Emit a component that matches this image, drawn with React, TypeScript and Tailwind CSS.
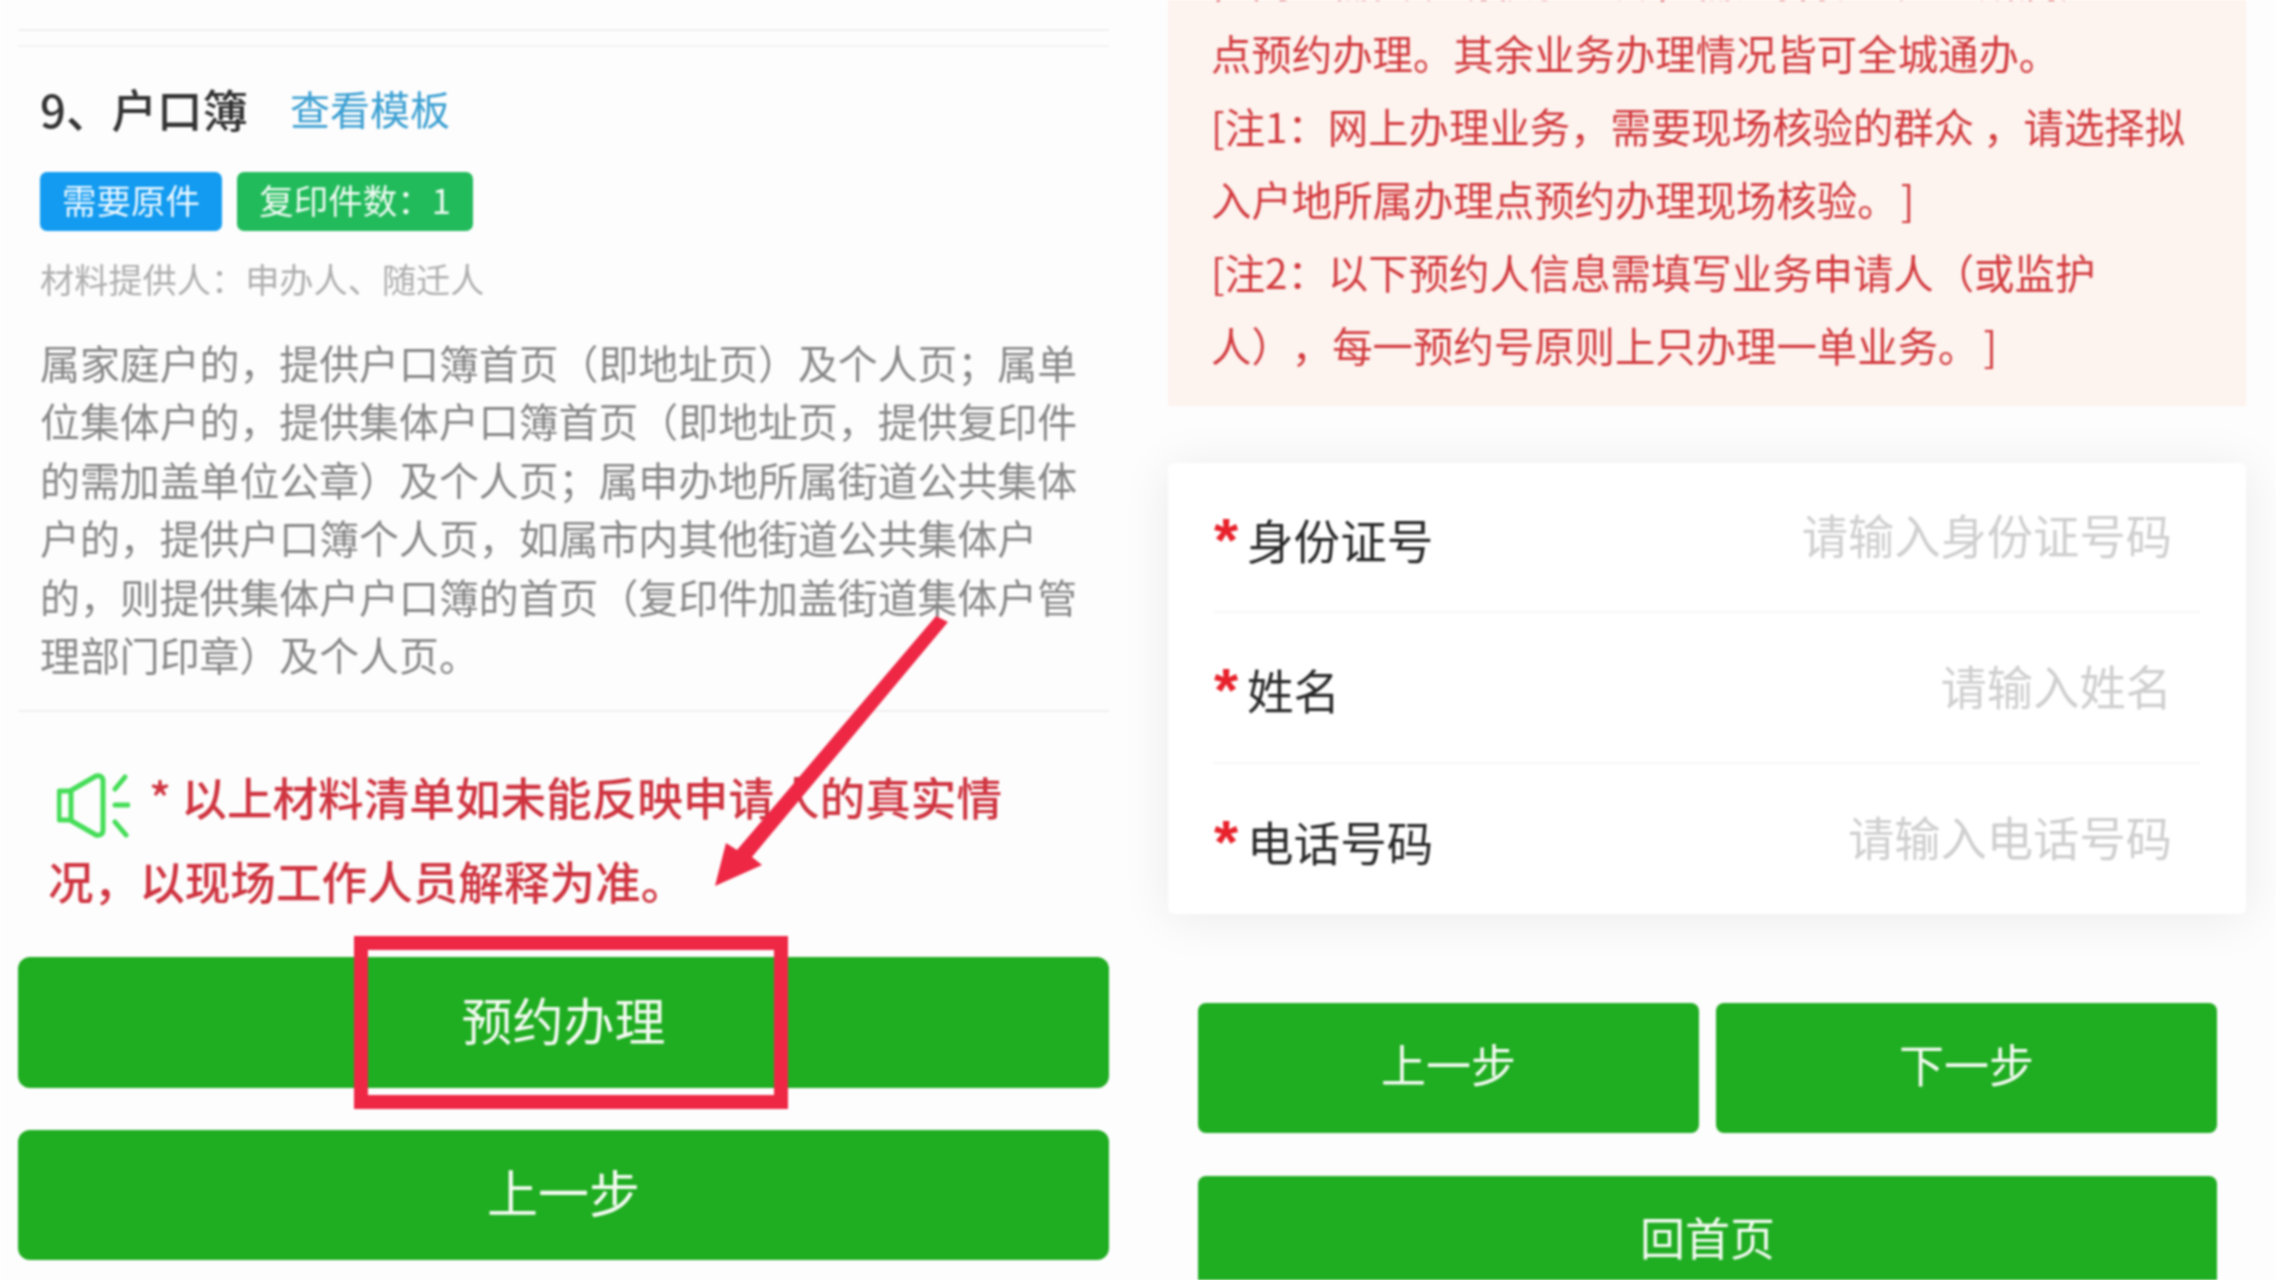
const cjk = "font-['Noto_Sans_CJK_SC','Noto_Sans',sans-serif]";

function GreenButton({ label, className }: { label: string; className: string }) {
  return (
    <div className={`flex shrink-0 items-center justify-center bg-[#1fad21] pb-[8px] text-[#f4fbf2] ${className}`}>
      {label}
    </div>
  );
}

function Speaker() {
  return (
    <svg viewBox="0 0 73 65" className="mr-[19px] inline-block h-[65px] w-[73px] align-[-22px]" fill="none" stroke="#45dd58" strokeWidth="5" strokeLinecap="round" strokeLinejoin="round">
      <path d="M3 18 H13 L39 3 Q46 2 46 8 V57 Q46 63 39 62 L13 47 H3 Q2 47 2 46 V19 Q2 18 3 18 Z" />
      <path d="M14 18 V47" />
      <path d="M58 16 L68 4" />
      <path d="M58 32 H71" />
      <path d="M58 49 L69 62" />
    </svg>
  );
}

function Row({ label, ph, h, last }: { label: string; ph: string; h: string; last?: boolean }) {
  return (
    <div className={`flex items-center justify-between ${h} ${last ? "" : "border-b-2 border-[#f6f6f6]"}`}>
      <div className="flex items-start text-[46.6px] leading-[60px] text-[#2a2a2a]">
        <span className="mr-[9px] mt-[4px] h-[52px] w-[24px] font-['Liberation_Sans',sans-serif] text-[62px] font-bold leading-[60px] text-[#e8212b]">*</span>
        <span className="pt-[3px]">{label}</span>
      </div>
      <span className="-mt-[6px] mr-[28px] text-[46.3px] leading-[60px] text-[#cfcfcf]">{ph}</span>
    </div>
  );
}

export default function App() {
  return (
    <div className={`relative flex h-[1280px] w-[2276px] overflow-hidden bg-[#fdfdfd] blur-[0.9px] ${cjk}`}>
      {/* left phone */}
      <div className="flex w-[1168px] shrink-0 flex-col pl-[18px] pr-[59px] pt-[29px]">
        <div className="h-[2px] shrink-0 bg-[#f0f0f0]" />
        <div className="mt-[14px] h-[2px] shrink-0 bg-[#f3f3f3]" />
        <div className="flex h-[125px] shrink-0 items-center pb-[4px] pl-[22px]">
          <span className="text-[45.5px] font-medium leading-[60px] text-[#333333]">9、户口簿</span>
          <span className="ml-[42px] text-[40px] leading-[60px] text-[#3a9fd2]">查看模板</span>
        </div>
        <div className="ml-[22px] flex shrink-0 gap-[15px]">
          <div className="flex h-[59px] w-[182px] items-center justify-center rounded-[7px] bg-[#129bf0] pb-[3px] text-[34.5px] text-[#eef8ff]">需要原件</div>
          <div className="flex h-[59px] w-[236px] items-center justify-center rounded-[7px] bg-[#22bb5c] pb-[3px] text-[34.5px] text-[#effbf2]">复印件数：1</div>
        </div>
        <div className="ml-[22px] mt-[22px] text-[34.2px] leading-[50px] text-[#aeaeae]">材料提供人：申办人、随迁人</div>
        <div className="ml-[22px] mt-[30px] w-[1040px] text-[39.9px] leading-[58.4px] text-[#878787]">
          属家庭户的，提供户口簿首页（即地址页）及个人页；属单位集体户的，提供集体户口簿首页（即地址页，提供复印件的需加盖单位公章）及个人页；属申办地所属街道公共集体户的，提供户口簿个人页，如属市内其他街道公共集体户的，则提供集体户户口簿的首页（复印件加盖街道集体户管理部门印章）及个人页。
        </div>
        <div className="mt-[27px] h-[2px] shrink-0 bg-[#f0f0f0]" />
        <div className="mt-[42px] w-[1060px] pl-[30px] text-[45.6px] font-medium leading-[84px] text-[#cf3440]">
          <div className="pl-[9px]">
            <Speaker />
            <span>* 以上材料清单如未能反映申请人的真实情</span>
          </div>
          <div>况，以现场工作人员解释为准。</div>
        </div>
        <GreenButton label="预约办理" className="mt-[35px] h-[131px] rounded-[12px] text-[51px]" />
        <GreenButton label="上一步" className="mt-[42px] h-[130px] rounded-[12px] text-[51px]" />
      </div>

      {/* right phone */}
      <div className="flex w-[1078px] shrink-0 flex-col">
        <div className="relative z-10 h-[406px] shrink-0 overflow-hidden bg-[#fdf3ef] pl-[43px] text-[40.4px] leading-[73px] text-[#d23a3e] [text-spacing-trim:space-all]">
          <div className="-mt-[57px]">
            <div>，同时需要现场核验业务，需选择拟入户地所属办理</div>
            <div>点预约办理。其余业务办理情况皆可全城通办。</div>
            <div>[注1：网上办理业务，需要现场核验的群众 ，请选择拟</div>
            <div>入户地所属办理点预约办理现场核验。<span className="ml-[3px]">]</span></div>
            <div>[注2：以下预约人信息需填写业务申请人（或监护</div>
            <div>人），每一预约号原则上只办理一单业务。<span className="ml-[5px]">]</span></div>
          </div>
        </div>
        <div className="mt-[57px] flex h-[451px] shrink-0 flex-col rounded-[6px] bg-white px-[46px] shadow-[0_4px_50px_rgba(0,0,0,0.08)]">
          <Row label="身份证号" ph="请输入身份证号码" h="h-[150px]" />
          <Row label="姓名" ph="请输入姓名" h="h-[151px]" />
          <Row label="电话号码" ph="请输入电话号码" h="h-[150px]" last />
        </div>
        <div className="mt-[89px] flex shrink-0 gap-[17px] pl-[30px] pr-[29px]">
          <GreenButton label="上一步" className="h-[130px] w-[501px] rounded-[8px] text-[45px]" />
          <GreenButton label="下一步" className="h-[130px] w-[501px] rounded-[8px] text-[45px]" />
        </div>
        <div className="mt-[43px] shrink-0 pl-[30px] pr-[29px]">
          <GreenButton label="回首页" className="h-[130px] w-[1019px] rounded-[8px] text-[45px]" />
        </div>
      </div>

      {/* red annotations */}
      <svg className="absolute left-[700px] top-[610px] h-[290px] w-[260px]" viewBox="700 610 260 290" fill="#ee2745">
        <path d="M936 616 L948 622 L752 857 L762 865 L715 886 L726 843 L737 850 Z" />
      </svg>
      <div className="absolute left-[354px] top-[936px] h-[173px] w-[434px] border-[14px] border-[#ee2745]" />
    </div>
  );
}
